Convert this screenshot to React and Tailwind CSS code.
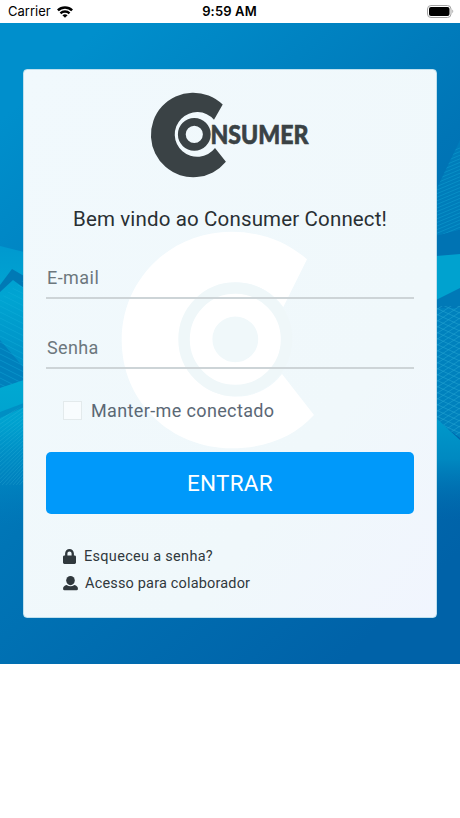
import { FaLock } from 'react-icons/fa'

const leftLines = Array.from({ length: 22 }, (_, i) => i * 6)
const rightLines = Array.from({ length: 30 }, (_, i) => i * 6)

function StatusBar() {
  return (
    <header className="flex h-[23px] items-center justify-between bg-white pr-[6px] pl-[8px] text-black">
      <div className="flex w-[120px] items-center gap-[6px]">
        <span className="font-['Inter',sans-serif] text-[13px] leading-none">Carrier</span>
        <svg width="16" height="12" viewBox="0 0 16 12" fill="none" stroke="currentColor" strokeWidth="2.5">
          <path d="M0.9 4.3C4.8 0.4 11.2 0.4 15.1 4.3" />
          <path d="M3.5 7.3C6 4.9 10 4.9 12.5 7.3" />
          <path d="M8 11.8L5.4 9.3C7 8 9 8 10.6 9.3Z" fill="currentColor" stroke="none" />
        </svg>
      </div>
      <span className="pr-[3px] font-['Inter',sans-serif] text-[13px] leading-none font-semibold tracking-[0.15px]">
        9:59 AM
      </span>
      <div className="flex w-[120px] justify-end">
        <svg width="27" height="13" viewBox="0 0 27 13">
          <rect x="0.5" y="0.5" width="23.5" height="12" rx="3.5" fill="none" stroke="#a3a3a3" />
          <rect x="2" y="2" width="20.5" height="9" rx="2" />
          <path d="M25.3 4.6C26.6 5.2 26.6 7.6 25.3 8.2Z" fill="#a3a3a3" />
        </svg>
      </div>
    </header>
  )
}

function Backdrop() {
  return (
    <svg className="absolute inset-0" width="460" height="641" viewBox="0 23 460 641">
      <defs>
        <linearGradient id="sky" gradientUnits="userSpaceOnUse" x1="0" y1="120" x2="430" y2="580">
          <stop offset="0" stopColor="#008fcc" />
          <stop offset="0.5" stopColor="#0075b6" />
          <stop offset="1" stopColor="#0062a8" />
        </linearGradient>
        <linearGradient id="wave" x1="0" y1="0" x2="0" y2="1">
          <stop offset="0" stopColor="#0099cf" />
          <stop offset="0.35" stopColor="#00a5d2" />
          <stop offset="1" stopColor="#0088c1" />
        </linearGradient>
        <linearGradient id="fadeLeft" x1="0" y1="0" x2="0" y2="1">
          <stop offset="0" stopColor="#00a9d2" />
          <stop offset="0.3" stopColor="#00a2cf" />
          <stop offset="1" stopColor="#0080bf" stopOpacity="0" />
        </linearGradient>
        <linearGradient id="fadeRight" x1="0" y1="0" x2="0" y2="1">
          <stop offset="0" stopColor="#009acb" />
          <stop offset="0.4" stopColor="#0089c1" />
          <stop offset="1" stopColor="#006db0" stopOpacity="0" />
        </linearGradient>
        <clipPath id="leftMesh">
          <path d="M0 298L24 280V380L0 388Z" />
        </clipPath>
        <clipPath id="leftFan">
          <path d="M0 418L24 405V485H0Z" />
        </clipPath>
        <clipPath id="rightTop">
          <path d="M436 190L460 140V230L436 236Z" />
        </clipPath>
        <clipPath id="rightMesh">
          <path d="M436 306H460V438L436 420Z" />
        </clipPath>
      </defs>
      <rect y="23" width="460" height="641" fill="url(#sky)" />
      <path d="M0 246L24 252V380L0 390Z" fill="url(#wave)" />
      <path d="M0 285L12 269L24 276V288L13 280L0 292Z" fill="#0079b5" />
      <path d="M0 340L24 368V380L0 388Z" fill="#0080bc" />
      <path d="M0 388L24 380V525H0Z" fill="url(#fadeLeft)" />
      <path d="M0 412L24 403V407L0 418Z" fill="#008fc4" />
      <g clipPath="url(#leftMesh)" stroke="#19b4de" strokeWidth="0.6" opacity="0.6">
        {leftLines.map((y) => (
          <path key={y} d={`M0 ${270 + y}L24 ${282 + y}`} />
        ))}
      </g>
      <g clipPath="url(#leftFan)" stroke="#4cc6e4" strokeWidth="0.6" opacity="0.35">
        {leftLines.map((y) => (
          <path key={y} d={`M0 ${420 + y * 0.7}L24 ${404 + y * 0.6}`} />
        ))}
      </g>
      <path d="M436 190L460 140V230L436 236Z" fill="#007dbb" />
      <g clipPath="url(#rightTop)" stroke="#12a3d3" strokeWidth="0.6" opacity="0.8">
        {rightLines.map((y) => (
          <path key={y} d={`M436 ${158 + y * 0.6}L460 ${148 + y * 0.6}`} />
        ))}
      </g>
      <path d="M436 236L460 230V254L436 256Z" fill="#0073b3" />
      <path d="M436 256L460 254V308H436Z" fill="#00a2cf" />
      <path d="M436 300L460 288V308H436Z" fill="#0079b7" />
      <path d="M436 308H460V438L436 420Z" fill="#0081bd" />
      <g clipPath="url(#rightMesh)" stroke="#35b5db" strokeWidth="0.6" opacity="0.65">
        {rightLines.map((y) => (
          <g key={y}>
            <path d={`M436 ${304 + y}L460 ${288 + y}`} />
            <path d={`M436 ${290 + y}L460 ${301 + y}`} />
          </g>
        ))}
      </g>
      <path d="M436 418L460 440V520H436Z" fill="url(#fadeRight)" />
    </svg>
  )
}

function Watermark() {
  return (
    <svg className="absolute top-[161px] left-[97px]" width="194" height="218" viewBox="121 231 194 218">
      <path
        d="M307 259.3C286 241 260 231.7 231 231.7C170 231.7 121.7 280 121.7 340C121.7 401 170 448.3 232 448.3C265 448.3 294 437 314 415L282 374A57 57 0 1 1 283.3 307Z"
        fill="#fff"
      />
      <circle cx="235.3" cy="339.3" r="51" fill="none" stroke="#eff7f9" strokeWidth="12" />
      <circle cx="235.3" cy="339.3" r="23" fill="#f0f8fa" />
      <circle cx="235.3" cy="339.3" r="34.2" fill="none" stroke="#fff" strokeWidth="22.6" />
    </svg>
  )
}

function Logo() {
  return (
    <svg className="overflow-visible" width="164" height="87" viewBox="148 92.7 164 87" fill="#3a4245">
      <path d="M222.7 104.3A42.3 42.3 0 1 0 225.9 161.5L215 147.7A22.4 22.4 0 1 1 214 119.4Z" />
      <circle cx="194.3" cy="134" r="12.5" fill="none" stroke="#3a4245" strokeWidth="7.8" />
      <text
        x="210.5"
        y="143.6"
        className="font-['Lato',sans-serif] text-[26px] font-black"
        textLength="98"
        lengthAdjust="spacingAndGlyphs"
        stroke="#3a4245"
        strokeWidth="0.6"
      >
        NSUMER
      </text>
    </svg>
  )
}

function PersonIcon() {
  return (
    <svg width="15" height="15" viewBox="0 0 15 15" fill="currentColor">
      <ellipse cx="7.5" cy="4.6" rx="4.3" ry="4.6" />
      <path d="M3.6 8.9Q7.5 11.4 11.4 8.9C13.8 9.5 14.9 10.8 14.9 12.4V12.9Q14.9 14.3 13.5 14.3H1.5Q0.1 14.3 0.1 12.9V12.4C0.1 10.8 1.2 9.5 3.6 8.9Z" />
    </svg>
  )
}

export default function App() {
  return (
    <div className="min-h-[818px] w-[460px] bg-white font-['Roboto',sans-serif]">
      <StatusBar />
      <main className="relative h-[641px] px-[23px] pt-[46px]">
        <Backdrop />
        <section className="relative h-[549px] w-[414px] rounded-[4px] border border-[#bfe0ee] bg-linear-to-br from-[#f1f9fd] via-[#f0f8fb] via-70% to-[#f1f5fe] px-[22px] pt-[23px]">
          <Watermark />
          <div className="relative">
            <div className="flex h-[87px] justify-center pr-[1px]">
              <Logo />
            </div>
            <h1 className="mt-[23px] text-center text-[20.5px] leading-[32px] tracking-[0.15px] whitespace-nowrap text-[#292f33]">
              Bem vindo ao Consumer Connect!
            </h1>
            <form>
              <input
                type="email"
                placeholder="E-mail"
                className="mt-[22px] block h-[42px] w-full border-b-2 border-[#cdd4d7] pl-px text-[18px] tracking-[0.45px] outline-none placeholder:text-[#6c777d]"
              />
              <input
                type="password"
                placeholder="Senha"
                className="mt-[28px] block h-[42px] w-full border-b-2 border-[#cdd4d7] pl-px text-[18px] tracking-[0.35px] outline-none placeholder:text-[#6c777d]"
              />
              <label className="mt-[31px] ml-[17px] flex h-[21px] items-center gap-[9px] text-[18px] text-[#5b6875]">
                <span className="h-[19px] w-[19px] border border-[#e3eaec] bg-[#f8fcfe]" />
                <span className="tracking-[0.37px]">Manter-me conectado</span>
              </label>
              <button
                type="button"
                className="mt-[31px] h-[62px] w-full rounded-[5px] bg-[#0099fa] pt-px text-[22.5px] tracking-[0.25px] text-white"
              >
                ENTRAR
              </button>
            </form>
            <nav className="mt-[29px] ml-[17px] flex flex-col text-[14.5px] text-[#30383d]">
              <a className="flex h-[27px] items-center gap-[8px]">
                <FaLock className="h-[15px] w-[13px]" />
                <span className="tracking-[0.3px]">Esqueceu a senha?</span>
              </a>
              <a className="flex h-[27px] items-center gap-[7px]">
                <PersonIcon />
                <span className="tracking-[0.17px]">Acesso para colaborador</span>
              </a>
            </nav>
          </div>
        </section>
      </main>
    </div>
  )
}
